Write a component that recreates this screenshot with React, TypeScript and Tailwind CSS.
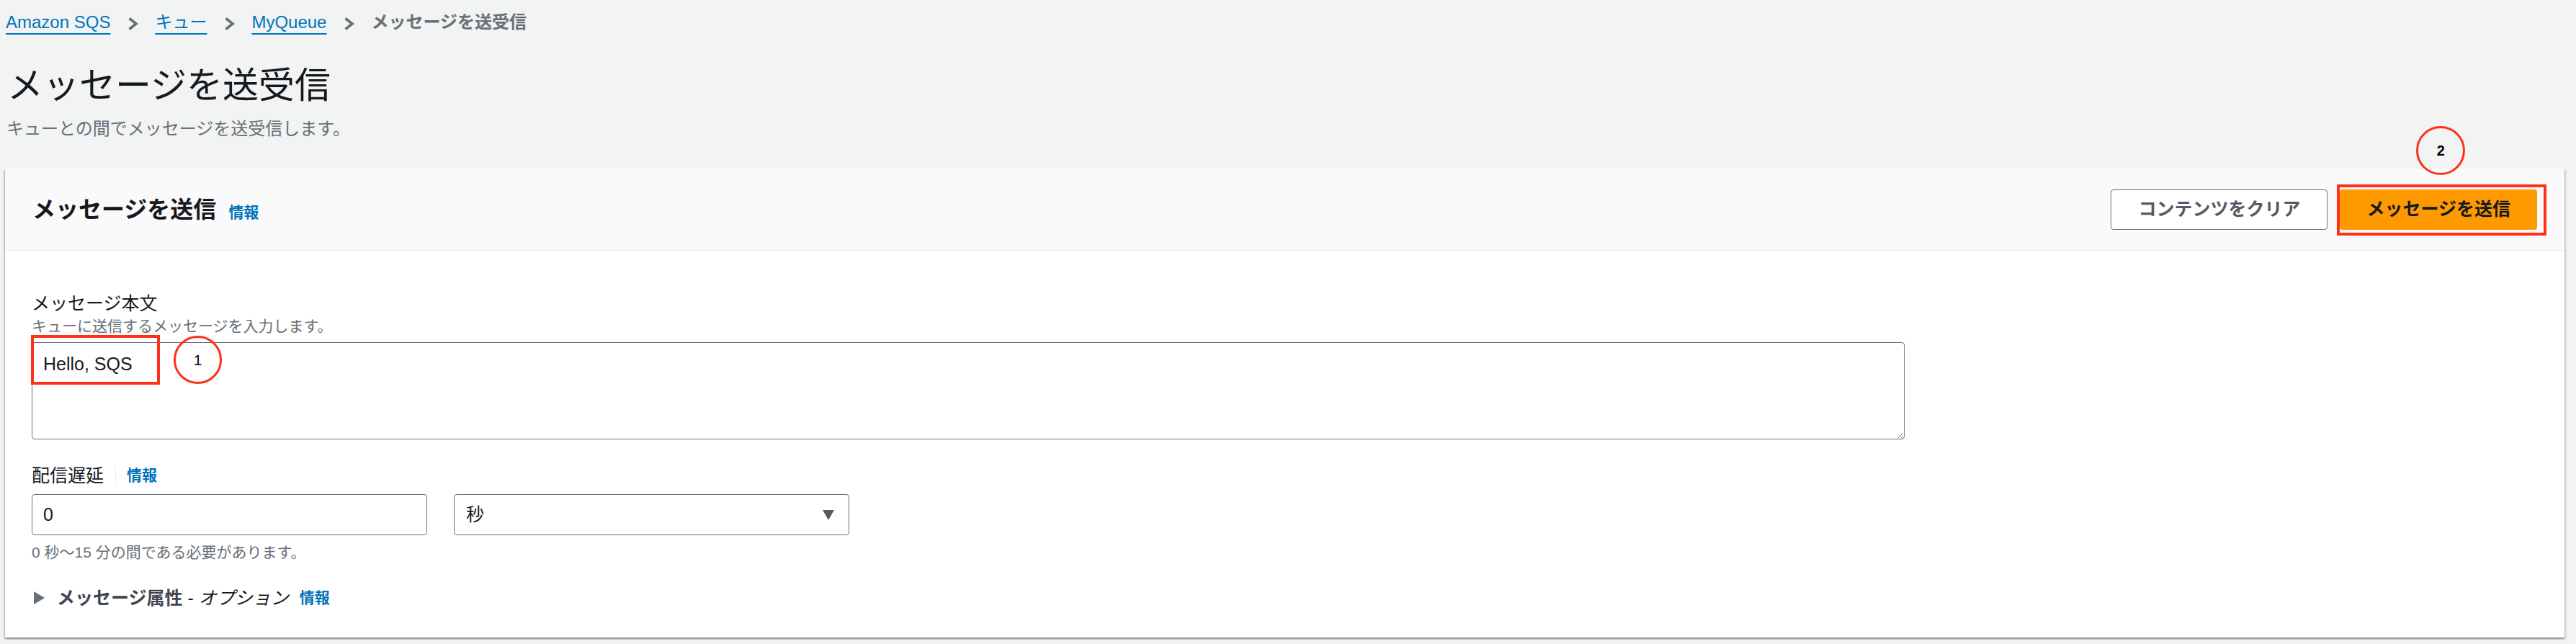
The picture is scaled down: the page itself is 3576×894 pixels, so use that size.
import React from 'react';

function Chevron() {
  return (
    <svg width="16" height="20" viewBox="0 0 16 20" fill="none" className="mt-[3px] shrink-0">
      <path d="M3.5 2.5 L13 10 L3.5 17.5" stroke="#687078" strokeWidth="3.6" />
    </svg>
  );
}

function Info({ className = '' }: { className?: string }) {
  return <span className={`text-[21px] font-bold text-[#0073bb] ${className}`}>情報</span>;
}

export default function App() {
  return (
    <div className="h-[894px] overflow-hidden bg-[#f2f3f3] pl-[7px] pr-[16px] font-['Liberation_Sans','Noto_Sans_CJK_JP',sans-serif] text-[#16191f]">
      {/* breadcrumbs */}
      <nav className="mt-[15px] flex h-[32px] items-center gap-[23px] pl-[1px] text-[24px] leading-[32px]">
        <a className="text-[#0073bb] underline decoration-2 underline-offset-[7px]">Amazon SQS</a>
        <Chevron />
        <a className="text-[#0073bb] underline decoration-2 underline-offset-[7px]">キュー</a>
        <Chevron />
        <a className="text-[#0073bb] underline decoration-2 underline-offset-[7px]">MyQueue</a>
        <Chevron />
        <span className="font-bold text-[#687078]">メッセージを送受信</span>
      </nav>

      {/* page header */}
      <h1 className="mt-[42px] pl-[3px] text-[50px] font-normal leading-[60px]">メッセージを送受信</h1>
      <p className="mt-[14px] pl-[2px] text-[24px] leading-[32px] text-[#687078]">
        キューとの間でメッセージを送受信します。
      </p>

      {/* container */}
      <div className="mt-[39px] bg-white shadow-[0_2px_2px_0_rgba(0,28,36,0.3),2px_2px_2px_0_rgba(0,28,36,0.15),-2px_2px_2px_0_rgba(0,28,36,0.15)]">
        <div className="flex h-[114px] items-center justify-between border-b border-[#eaeded] bg-[#fafafa] pl-[38px] pr-[38px]">
          <div className="flex items-baseline">
            <h2 className="text-[32px] font-bold leading-[40px]">メッセージを送信</h2>
            <Info className="ml-[17px]" />
          </div>
          <div className="flex items-center gap-[17px]">
            <button className="h-[56px] rounded-[4px] border-[1.5px] border-[#687078] bg-white px-[37px] text-[25px] font-bold text-[#545b64]">
              コンテンツをクリア
            </button>
            <div className="relative">
              <button className="h-[56px] rounded-[4px] bg-[#ff9900] px-[37px] text-[25px] font-bold text-[#16191f]">
                メッセージを送信
              </button>
              {/* annotation 2 */}
              <div className="pointer-events-none absolute -bottom-[8px] -left-[4px] -right-[13px] -top-[7px] border-4 border-[#ff2f1a]" />
              <div className="absolute -top-[88px] left-1/2 -ml-[31px] flex h-[68px] w-[68px] items-center justify-center rounded-full border-[3px] border-[#ff2f1a] text-[20px] font-bold text-black">
                2
              </div>
            </div>
          </div>
        </div>

        <div className="pb-[39px] pl-[37px] pr-[38px] pt-[57px]">
          <div className="text-[25px] leading-[32px]">メッセージ本文</div>
          <div className="mt-[2px] text-[21px] leading-[28px] text-[#687078]">
            キューに送信するメッセージを入力します。
          </div>
          <div className="relative mt-[8px] h-[135px] w-[2600px]">
            <textarea
              defaultValue="Hello, SQS"
              className="block h-full w-full rounded-[4px] border border-[#687078] bg-white pl-[15px] pt-[13px] text-[25px] leading-[32px] text-[#16191f] outline-none"
            />
            {/* annotation 1 */}
            <div className="pointer-events-none absolute -left-[1px] -top-[10px] h-[69px] w-[179px] border-4 border-[#ff2f1a]" />
            <div className="absolute -top-[9px] left-[197px] flex h-[67px] w-[67px] items-center justify-center rounded-full border-[3px] border-[#ff2f1a] text-[21px] text-black">
              1
            </div>
          </div>

          <div className="mt-[34px] flex h-[32px] items-center">
            <span className="text-[25px] leading-[32px]">配信遅延</span>
            <span className="ml-[16px] h-[28px] w-px bg-[#eaeded]" />
            <Info className="ml-[15px]" />
          </div>
          <div className="mt-[10px] flex gap-[37px]">
            <div className="flex h-[57px] w-[549px] items-center rounded-[4px] border border-[#687078] bg-white pl-[15px] text-[25px]">
              0
            </div>
            <div className="flex h-[57px] w-[549px] items-center justify-between rounded-[4px] border border-[#687078] bg-white pl-[16px] pr-[20px] text-[25px]">
              <span>秒</span>
              <svg width="16" height="14" viewBox="0 0 16 14">
                <path d="M0 0 H16 L8 14 Z" fill="#545b64" />
              </svg>
            </div>
          </div>
          <div className="mt-[10px] text-[21px] leading-[28px] text-[#687078]">
            0 秒〜15 分の間である必要があります。
          </div>

          <div className="mt-[33px] flex h-[32px] items-center">
            <svg width="15" height="18" viewBox="0 0 15 18" className="ml-[3px] shrink-0">
              <path d="M0 0 L15 9 L0 18 Z" fill="#687078" />
            </svg>
            <span className="ml-[17px] text-[25px] leading-[32px]">
              <span className="font-bold text-[#414750]">メッセージ属性</span>
              <span> - </span>
              <i>オプション</i>
            </span>
            <Info className="ml-[15px]" />
          </div>
        </div>
      </div>
    </div>
  );
}
